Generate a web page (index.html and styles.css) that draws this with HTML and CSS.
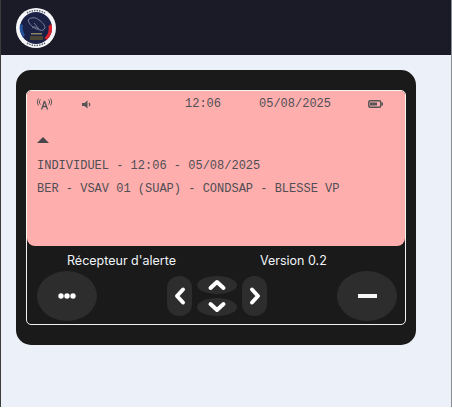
FILE: index.html
```html
<!DOCTYPE html>
<html lang="fr">
<head>
    <meta charset="UTF-8">
    <meta name="viewport" content="width=device-width, initial-scale=1.0">
    <title>Récepteur d'alerte</title>
    <link rel="stylesheet" href="styles.css">
</head>
<body>
    <div class="page">
        <div class="header">
            <svg class="logo" viewBox="0 0 40 40">
                <circle cx="20" cy="20" r="20" fill="#f6f7fa"/>
                <circle cx="20" cy="20" r="16" fill="#1a2145"/>
                <path d="M35.500 16a16 16 0 0 1 -5 16l-2 -2a13 13 0 0 0 4 -12z" fill="#d8232f"/>
                <path d="M7 29a16 16 0 0 1 -3 -13l3 1a13 13 0 0 0 2 10z" fill="#24539c"/>
                <path d="M12 12c3 -3 8 -3 11 0c3 2 6 5 6 8c-1 2 -3 3 -5 2c-4 -1 -10 -3 -12 -10z" fill="none" stroke="#8f95ab" stroke-width=".8"/>
                <path d="M16 20c2 -2 5 -1 6 1M18 15l5 6" fill="none" stroke="#8f95ab" stroke-width=".7"/>
                <path d="M15 25h11v1.500h-11z" fill="#8b8260"/>
                <path d="M14 28h13v4h-13z" fill="#4a4636"/>
                <path d="M11 5a17.500 17.500 0 0 1 18 0M11 35a17.500 17.500 0 0 0 18 0" fill="none" stroke="#5d6070" stroke-width="1.500" stroke-dasharray="1.500 1"/>
            </svg>
        </div>

        <div class="content">
            <div class="device">
                <div class="frame">
                    <div class="screen">
                        <div class="status">
                            <svg class="icon-antenna" viewBox="0 0 15 12">
                                <path d="M7.5 3L4.5 11.500M7.500 3L10.500 11.500M5.500 8.500H9.500" fill="none" stroke="#555" stroke-width="1.300"/>
                                <path d="M3.500 1.500C2 3 2 5 3.500 6.500M11.500 1.500C13 3 13 5 11.500 6.500M1.500 .5C0 3 0 5 1.500 7.500M13.500 .5C15 3 15 5 13.500 7.500" fill="none" stroke="#555"/>
                            </svg>
                            <svg class="icon-speaker" viewBox="0 0 9 9">
                                <path d="M0 3H2.500L5.500 .5V8.500L2.500 6H0z" fill="#555"/>
                                <path d="M7 3C8 4 8 5 7 6" fill="none" stroke="#555" stroke-width="1.200"/>
                            </svg>
                            <span>12:06</span>
                            <span>05/08/2025</span>
                            <svg class="icon-battery" viewBox="0 0 15 8">
                                <rect x=".75" y=".75" width="12" height="6.500" rx="1.500" fill="none" stroke="#555" stroke-width="1.500"/>
                                <rect x="2" y="2.500" width="7" height="3" fill="#555"/>
                                <rect x="13.500" y="2.500" width="1.500" height="3" fill="#555"/>
                            </svg>
                        </div>
                        <div class="arrow"></div>
                        <p class="line">INDIVIDUEL - 12:06 - 05/08/2025</p>
                        <p class="line">BER - VSAV 01 (SUAP) - CONDSAP - BLESSE VP</p>
                    </div>

                    <div class="labels">
                        <span>Récepteur d'alerte</span>
                        <span>Version 0.2</span>
                    </div>

                    <div class="controls">
                        <button class="btn-round">
                            <svg width="18" height="6" viewBox="0 0 18 6">
                                <circle cx="3" cy="3" r="2.700" fill="#fff"/>
                                <circle cx="9" cy="3" r="2.700" fill="#fff"/>
                                <circle cx="15" cy="3" r="2.700" fill="#fff"/>
                            </svg>
                        </button>

                        <div class="dpad">
                            <button class="btn-side">
                                <svg width="12" height="20" viewBox="0 0 12 20"><path d="M9 3.500L3 10L9 16.500" class="chevron"/></svg>
                            </button>
                            <div class="dpad-middle">
                                <button class="btn-flat">
                                    <svg width="20" height="12" viewBox="0 0 20 12"><path d="M3.500 9L10 3L16.500 9" class="chevron"/></svg>
                                </button>
                                <button class="btn-flat">
                                    <svg width="20" height="12" viewBox="0 0 20 12"><path d="M3.500 3L10 9L16.500 3" class="chevron"/></svg>
                                </button>
                            </div>
                            <button class="btn-side">
                                <svg width="12" height="20" viewBox="0 0 12 20"><path d="M3 3.500L9 10L3 16.500" class="chevron"/></svg>
                            </button>
                        </div>

                        <button class="btn-round">
                            <span class="minus"></span>
                        </button>
                    </div>
                </div>
            </div>
        </div>
    </div>
</body>
</html>
```

FILE: styles.css
```css
* {
    margin: 0;
    padding: 0;
    box-sizing: border-box;
}

html {
    background: white;
}

body {
    font-family: 'Inter', 'Liberation Sans', sans-serif;
}

.page {
    height: 407px;
    background: #ecf0f8;
    border-left: 1px solid #3c3c3c;
    border-right: 1px solid #8a8d94;
}

.header {
    height: 55px;
    background: #1a1b26;
    padding: 8px 15px;
}

.logo {
    display: block;
    width: 40px;
    height: 40px;
}

.content {
    padding: 15px;
}

.device {
    width: 400px;
    height: 275px;
    background: #1a1a1a;
    border-radius: 15px;
    padding: 20px 10px;
}

.frame {
    height: 235px;
    border: 1px solid #f2f2f2;
    border-radius: 5px;
}

.screen {
    height: 155px;
    background: #ffaeae;
    border-radius: 4px 4px 8px 8px;
    padding: 6px 10px 0;
    font-family: 'Liberation Mono', monospace;
    font-size: 12px;
    color: #4f4f54;
}

.status {
    display: grid;
    grid-template-columns: 45px 103px 74px 109px auto;
    align-items: center;
    height: 14px;
}

.icon-antenna {
    width: 15px;
    height: 12px;
}

.icon-speaker {
    width: 9px;
    height: 9px;
}

.icon-battery {
    width: 15px;
    height: 8px;
}

.arrow {
    width: 0;
    margin-top: 26px;
    border-left: 6px solid transparent;
    border-right: 6px solid transparent;
    border-bottom: 6px solid #48484c;
}

.line {
    height: 23px;
    line-height: 23px;
}

.arrow + .line {
    margin-top: 12px;
}

.labels {
    display: grid;
    grid-template-columns: 193px auto;
    padding: 4px 0 1px 40px;
    height: 25px;
    align-items: center;
    font-size: 12.500px;
    color: #f0f4f8;
}

.controls {
    display: flex;
    justify-content: space-between;
    align-items: center;
    padding: 0 8px 0 10px;
}

button {
    display: flex;
    align-items: center;
    justify-content: center;
    border: none;
    background: #2d2d2d;
}

.btn-round {
    width: 60px;
    height: 50px;
    border-radius: 50%;
}

.minus {
    width: 19px;
    height: 4px;
    background: #f6f6f6;
}

.dpad {
    display: flex;
    gap: 5px;
}

.btn-side {
    width: 25px;
    height: 40px;
    border-radius: 12px;
}

.dpad-middle {
    display: flex;
    flex-direction: column;
    gap: 4px;
}

.btn-flat {
    width: 40px;
    height: 18px;
    border-radius: 50%;
}

.chevron {
    fill: none;
    stroke: #fff;
    stroke-width: 4;
    stroke-linecap: round;
    stroke-linejoin: round;
}
```
